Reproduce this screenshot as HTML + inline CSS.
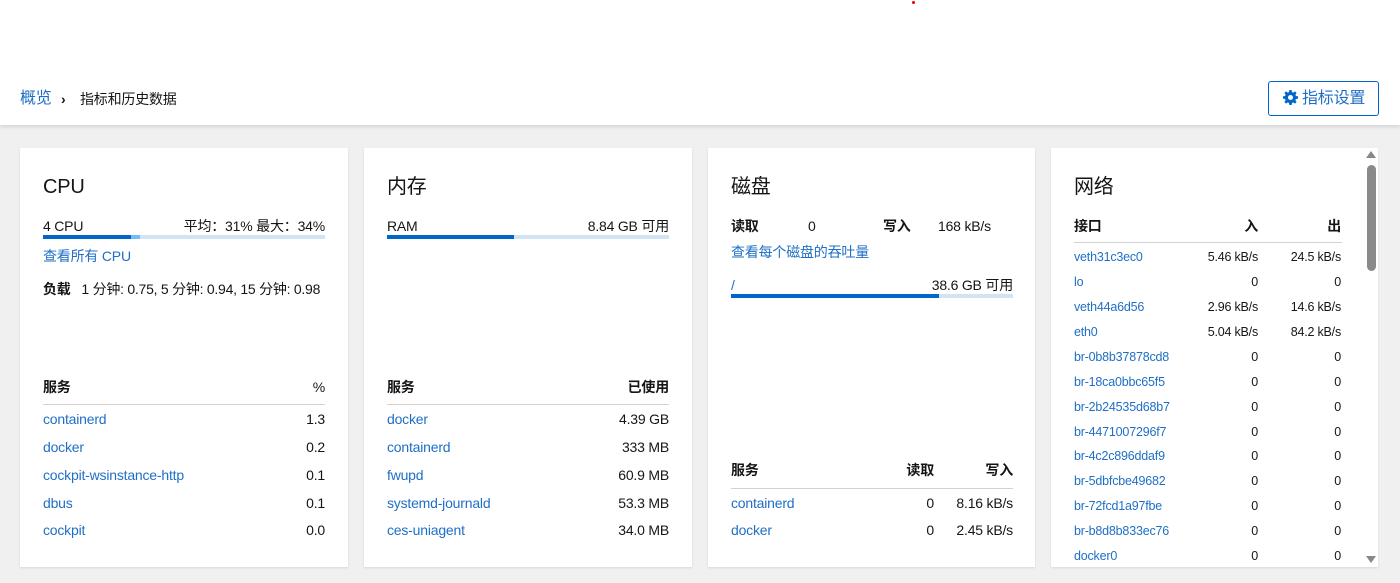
<!DOCTYPE html>
<html><head><meta charset="utf-8"><style>
*{margin:0;padding:0;box-sizing:border-box}
body{width:1400px;height:583px;background:#f0f0f0;font-family:"Liberation Sans","Noto Sans CJK SC",sans-serif;color:#151515;position:relative;overflow:hidden;font-size:14px;letter-spacing:-0.2px}
.top{position:absolute;left:0;top:0;width:1400px;height:125px;background:#fff;box-shadow:0 2px 4px rgba(0,0,0,.12)}
.card{position:absolute;top:148px;height:419px;background:#fff;box-shadow:0 1px 2px rgba(0,0,0,.1)}
.t{position:absolute;height:20px;line-height:20px;white-space:nowrap;margin-top:1px}
.r{text-align:right}
.l{color:#1f6fc6}
.b{font-weight:bold}
.h{font-size:20px;height:30px;line-height:30px}
.s{font-size:12.5px}
.bar{position:absolute;height:4px;background:#d2e3f4}
.bar i{position:absolute;left:0;top:0;height:4px;background:#0066cc}
.line{position:absolute;height:1px;background:#d2d2d2}
</style></head><body>
<div class="top"></div>
<div style="position:absolute;left:912px;top:1px;width:3px;height:3px;border-radius:50%;background:#e00"></div>
<div class="t l" style="left:20px;top:88px;font-size:16px">概览</div>
<div class="t b" style="left:61px;top:88px;font-size:14px">›</div>
<div class="t" style="left:80px;top:88px;font-size:14px">指标和历史数据</div>
<div style="position:absolute;left:1268px;top:81px;width:111px;height:35px;border:1px solid #0066cc;border-radius:3px;background:#fff"></div>
<svg style="position:absolute;left:1283px;top:90px" width="15" height="15" viewBox="0 0 16 16"><path fill="#0066cc" d="M6.8 0h2.4l.4 2.2 1.3.6 1.9-1.3 1.7 1.7-1.3 1.9.6 1.3 2.2.4v2.4l-2.2.4-.6 1.3 1.3 1.9-1.7 1.7-1.9-1.3-1.3.6-.4 2.2H6.8l-.4-2.2-1.3-.6-1.9 1.3-1.7-1.7 1.3-1.9-.6-1.3L0 9.2V6.8l2.2-.4.6-1.3-1.3-1.9 1.7-1.7 1.9 1.3 1.3-.6zM8 5.3A2.7 2.7 0 1 0 8 10.7 2.7 2.7 0 1 0 8 5.3z"/></svg>
<div class="t l" style="left:1302px;top:88px;font-size:16px">指标设置</div>

<div class="card" style="left:20px;width:328px"></div>
<div class="card" style="left:364px;width:328px"></div>
<div class="card" style="left:708px;width:327px"></div>
<div class="card" style="left:1051px;width:327px"></div>

<!-- CPU -->
<div class="t h" style="left:43px;top:171px">CPU</div>
<div class="t" style="left:43px;top:215px">4 CPU</div>
<div class="t r" style="right:1075px;top:215px">平均：31% 最大：34%</div>
<div class="bar" style="left:43px;top:235px;width:282px"><i style="width:97px;background:#73bcf7"></i><i style="width:88px"></i></div>
<div class="t l" style="left:43px;top:245px">查看所有 CPU</div>
<div class="t" style="left:43px;top:278px;letter-spacing:-0.25px"><b>负载</b>&nbsp;&nbsp; 1 分钟: 0.75, 5 分钟: 0.94, 15 分钟: 0.98</div>
<div class="t b" style="left:43px;top:376px">服务</div><div class="t r" style="right:1075px;top:376px">%</div>
<div class="line" style="left:43px;top:404px;width:282px"></div>
<div class="t l" style="left:43px;top:408px">containerd</div><div class="t r" style="right:1075px;top:408px">1.3</div>
<div class="t l" style="left:43px;top:436px">docker</div><div class="t r" style="right:1075px;top:436px">0.2</div>
<div class="t l" style="left:43px;top:464px">cockpit-wsinstance-http</div><div class="t r" style="right:1075px;top:464px">0.1</div>
<div class="t l" style="left:43px;top:492px">dbus</div><div class="t r" style="right:1075px;top:492px">0.1</div>
<div class="t l" style="left:43px;top:519px">cockpit</div><div class="t r" style="right:1075px;top:519px">0.0</div>

<!-- Memory -->
<div class="t h" style="left:387px;top:171px">内存</div>
<div class="t" style="left:387px;top:215px">RAM</div>
<div class="t r" style="right:731px;top:215px">8.84 GB 可用</div>
<div class="bar" style="left:387px;top:235px;width:282px"><i style="width:127px"></i></div>
<div class="t b" style="left:387px;top:376px">服务</div><div class="t r b" style="right:731px;top:376px">已使用</div>
<div class="line" style="left:387px;top:404px;width:282px"></div>
<div class="t l" style="left:387px;top:408px">docker</div><div class="t r" style="right:731px;top:408px">4.39 GB</div>
<div class="t l" style="left:387px;top:436px">containerd</div><div class="t r" style="right:731px;top:436px">333 MB</div>
<div class="t l" style="left:387px;top:464px">fwupd</div><div class="t r" style="right:731px;top:464px">60.9 MB</div>
<div class="t l" style="left:387px;top:492px">systemd-journald</div><div class="t r" style="right:731px;top:492px">53.3 MB</div>
<div class="t l" style="left:387px;top:519px">ces-uniagent</div><div class="t r" style="right:731px;top:519px">34.0 MB</div>

<!-- Disk -->
<div class="t h" style="left:731px;top:171px">磁盘</div>
<div class="t b" style="left:731px;top:215px">读取</div>
<div class="t" style="left:808px;top:215px">0</div>
<div class="t b" style="left:883px;top:215px">写入</div>
<div class="t" style="left:938px;top:215px">168 kB/s</div>
<div class="t l" style="left:731px;top:241px">查看每个磁盘的吞吐量</div>
<div class="t l" style="left:731px;top:274px">/</div>
<div class="t r" style="right:387px;top:274px">38.6 GB 可用</div>
<div class="bar" style="left:731px;top:294px;width:282px"><i style="width:208px"></i></div>
<div class="t b" style="left:731px;top:459px">服务</div>
<div class="t r b" style="right:466px;top:459px">读取</div>
<div class="t r b" style="right:387px;top:459px">写入</div>
<div class="line" style="left:731px;top:488px;width:282px"></div>
<div class="t l" style="left:731px;top:492px">containerd</div><div class="t r" style="right:466px;top:492px">0</div><div class="t r" style="right:387px;top:492px">8.16 kB/s</div>
<div class="t l" style="left:731px;top:519px">docker</div><div class="t r" style="right:466px;top:519px">0</div><div class="t r" style="right:387px;top:519px">2.45 kB/s</div>

<!-- Network -->
<div class="t h" style="left:1074px;top:171px">网络</div>
<div class="t b" style="left:1074px;top:215px">接口</div>
<div class="t r b" style="right:142px;top:215px">入</div>
<div class="t r b" style="right:59px;top:215px">出</div>
<div class="line" style="left:1074px;top:242px;width:268px"></div>
<div class="t l s" style="left:1074px;top:246px">veth31c3ec0</div><div class="t r s" style="right:142px;top:246px">5.46 kB/s</div><div class="t r s" style="right:59px;top:246px">24.5 kB/s</div>
<div class="t l s" style="left:1074px;top:271px">lo</div><div class="t r s" style="right:142px;top:271px">0</div><div class="t r s" style="right:59px;top:271px">0</div>
<div class="t l s" style="left:1074px;top:296px">veth44a6d56</div><div class="t r s" style="right:142px;top:296px">2.96 kB/s</div><div class="t r s" style="right:59px;top:296px">14.6 kB/s</div>
<div class="t l s" style="left:1074px;top:321px">eth0</div><div class="t r s" style="right:142px;top:321px">5.04 kB/s</div><div class="t r s" style="right:59px;top:321px">84.2 kB/s</div>
<div class="t l s" style="left:1074px;top:346px">br-0b8b37878cd8</div><div class="t r s" style="right:142px;top:346px">0</div><div class="t r s" style="right:59px;top:346px">0</div>
<div class="t l s" style="left:1074px;top:371px">br-18ca0bbc65f5</div><div class="t r s" style="right:142px;top:371px">0</div><div class="t r s" style="right:59px;top:371px">0</div>
<div class="t l s" style="left:1074px;top:396px">br-2b24535d68b7</div><div class="t r s" style="right:142px;top:396px">0</div><div class="t r s" style="right:59px;top:396px">0</div>
<div class="t l s" style="left:1074px;top:421px">br-4471007296f7</div><div class="t r s" style="right:142px;top:421px">0</div><div class="t r s" style="right:59px;top:421px">0</div>
<div class="t l s" style="left:1074px;top:445px">br-4c2c896ddaf9</div><div class="t r s" style="right:142px;top:445px">0</div><div class="t r s" style="right:59px;top:445px">0</div>
<div class="t l s" style="left:1074px;top:470px">br-5dbfcbe49682</div><div class="t r s" style="right:142px;top:470px">0</div><div class="t r s" style="right:59px;top:470px">0</div>
<div class="t l s" style="left:1074px;top:495px">br-72fcd1a97fbe</div><div class="t r s" style="right:142px;top:495px">0</div><div class="t r s" style="right:59px;top:495px">0</div>
<div class="t l s" style="left:1074px;top:520px">br-b8d8b833ec76</div><div class="t r s" style="right:142px;top:520px">0</div><div class="t r s" style="right:59px;top:520px">0</div>
<div class="t l s" style="left:1074px;top:545px">docker0</div><div class="t r s" style="right:142px;top:545px">0</div><div class="t r s" style="right:59px;top:545px">0</div>
<!-- scrollbar -->
<div style="position:absolute;left:1366px;top:151px;width:0;height:0;border-left:5px solid transparent;border-right:5px solid transparent;border-bottom:7px solid #888"></div>
<div style="position:absolute;left:1367px;top:165px;width:9px;height:106px;border-radius:5px;background:#8a8a8a"></div>
<div style="position:absolute;left:1366px;top:556px;width:0;height:0;border-left:5px solid transparent;border-right:5px solid transparent;border-top:7px solid #888"></div>
</body></html>
